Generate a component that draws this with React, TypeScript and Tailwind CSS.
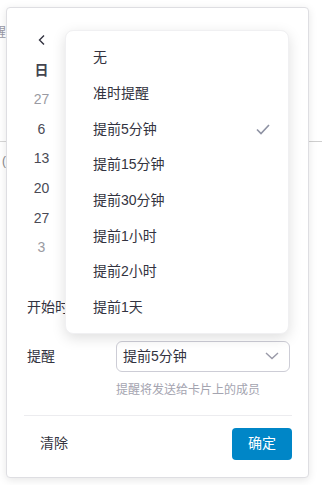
import React from "react";

const font = { fontFamily: '"Liberation Sans", "Noto Sans CJK SC", sans-serif' };

export default function App() {
  const dates: { t: string; muted?: boolean }[] = [
    { t: "27", muted: true },
    { t: "6" },
    { t: "13" },
    { t: "20" },
    { t: "27" },
    { t: "3", muted: true },
  ];
  const items = ["无", "准时提醒", "提前5分钟", "提前15分钟", "提前30分钟", "提前1小时", "提前2小时", "提前1天"];
  return (
    <div className="relative w-[322px] h-[485px] bg-white overflow-hidden text-[#333340]" style={font}>
      {/* background page bits */}
      <div className="absolute left-[-7px] top-[22px] text-[13px] text-[#9a9aa6]">醒</div>
      <div className="absolute left-0 top-[141px] w-[8px] h-px bg-[#d6d6d6]" />
      <div className="absolute left-[2px] top-[152px] text-[12px] text-[#888]">(</div>
      <div className="absolute left-[308px] top-[141px] w-[14px] h-px bg-[#cfcfcf]" />

      {/* popover */}
      <div className="absolute left-[6px] top-[7px] w-[303px] h-[471px] bg-white border border-[#dedee2] rounded-[4px] shadow-[0_2px_8px_rgba(0,0,0,0.10)] flex flex-col">
        <div className="pt-[17px] pl-[19px] flex flex-col w-[50px] text-[14px]">
          <div className="h-[30px] flex items-center justify-center">
            <svg width="10" height="12" viewBox="0 0 10 12" fill="none">
              <path d="M7 1.5 L2.5 6 L7 10.5" stroke="#333340" strokeWidth="1.4" />
            </svg>
          </div>
          <div className="h-[30px] flex items-center justify-center font-bold text-[#444450]">日</div>
          {dates.map((d, i) => (
            <div key={i} className={`h-[29.6px] flex items-center justify-center ${d.muted ? "text-[#9a9aa2]" : "text-[#4a4a55]"}`}>
              {d.t}
            </div>
          ))}
        </div>
        <div className="mt-[29px] h-[32px] pl-[20px] flex items-center text-[14px]">开始时间</div>
        <div className="mt-[17px] pl-[20px] flex items-center text-[14px]">
          <div className="w-[89px]">提醒</div>
          <div className="w-[174px] h-[31px] border border-[#cdcdd6] rounded-[6px] flex items-center justify-between pl-[6px] pr-[9px]">
            <span>提前5分钟</span>
            <svg width="16" height="10" viewBox="0 0 16 10" fill="none">
              <path d="M2 2 L8 7.5 L14 2" stroke="#9a9aa8" strokeWidth="1.4" />
            </svg>
          </div>
        </div>
        <div className="mt-[11px] ml-[109px] text-[12px] leading-[14px] text-[#a4a4b0]">提醒将发送给卡片上的成员</div>
        <div className="mt-[18px] ml-[17px] mr-[16px] h-px bg-[#ececef]" />
        <div className="mt-[12px] flex items-center justify-between pl-[33px] pr-[16px] text-[14px]">
          <span>清除</span>
          <button className="w-[60px] h-[32px] rounded-[4px] bg-[#0086c7] text-white text-[14px]">确定</button>
        </div>
      </div>

      {/* dropdown menu */}
      <div className="absolute left-[65px] top-[30px] w-[224px] h-[304px] bg-white rounded-[8px] border border-[#f0f0f2] shadow-[0_4px_14px_rgba(0,0,0,0.13)] pt-[9px] text-[14px]">
        {items.map((it, i) => (
          <div key={i} className="h-[35.7px] flex items-center justify-between pl-[27px] pr-[18px]">
            <span>{it}</span>
            {i === 2 && (
              <svg width="14" height="11" viewBox="0 0 14 11" fill="none">
                <path d="M1 5.5 L5 9.5 L13 1" stroke="#8e92a3" strokeWidth="1.6" />
              </svg>
            )}
          </div>
        ))}
      </div>
    </div>
  );
}
